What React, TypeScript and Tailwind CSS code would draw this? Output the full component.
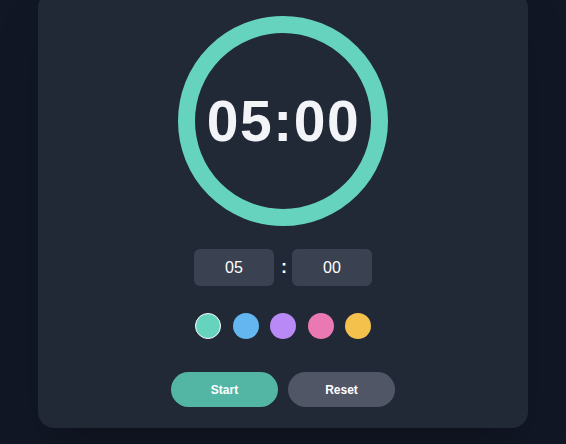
import React, { useState } from "react";

const swatches = ["#66d3bf", "#63b6f0", "#b98af6", "#ea78b2", "#f4c24c"];

const App: React.FC = () => {
  const [minutes, setMinutes] = useState("05");
  const [seconds, setSeconds] = useState("00");
  const [active, setActive] = useState(0);

  return (
    <div
      className="h-[444px] w-full overflow-hidden bg-[#111725] flex items-end justify-center pb-[16px]"
      style={{ fontFamily: '"Liberation Sans", Arial, sans-serif' }}
    >
      <div className="w-[490px] rounded-2xl bg-[#212836] shadow-2xl flex flex-col items-center pt-6 pb-[21px]">
        {/* timer ring */}
        <div className="w-[210px] h-[210px] rounded-full border-[17px] border-[#66d3bf] flex items-center justify-center">
          <span className="text-[57px] font-bold tracking-[1.5px] text-[#f3f4f7] leading-none pl-[1px]">
            {minutes}:{seconds}
          </span>
        </div>

        {/* inputs */}
        <div className="mt-[23px] flex items-center gap-[7px]">
          <input
            value={minutes}
            onChange={(e) => setMinutes(e.target.value)}
            className="w-[80px] h-[37px] rounded-md bg-[#3a4150] text-center text-[16px] text-white outline-none"
          />
          <span className="text-[18px] font-bold text-white w-[4px] text-center">:</span>
          <input
            value={seconds}
            onChange={(e) => setSeconds(e.target.value)}
            className="w-[80px] h-[37px] rounded-md bg-[#3a4150] text-center text-[16px] text-white outline-none"
          />
        </div>

        {/* colours */}
        <div className="mt-[27px] flex items-center gap-[11.5px]">
          {swatches.map((c, i) => (
            <button
              key={c}
              onClick={() => setActive(i)}
              className={
                i === active
                  ? "w-[26px] h-[26px] rounded-full border-[1.5px] border-white"
                  : "w-[26px] h-[26px] rounded-full"
              }
              style={{ backgroundColor: c }}
            />
          ))}
        </div>

        {/* buttons */}
        <div className="mt-[33px] flex items-center gap-[10px]">
          <button className="w-[107px] h-[35px] rounded-full bg-[#53b6a5] text-[12px] font-bold text-white">
            Start
          </button>
          <button className="w-[107px] h-[35px] rounded-full bg-[#505666] text-[12px] font-bold text-white">
            Reset
          </button>
        </div>
      </div>
    </div>
  );
};

export default App;
